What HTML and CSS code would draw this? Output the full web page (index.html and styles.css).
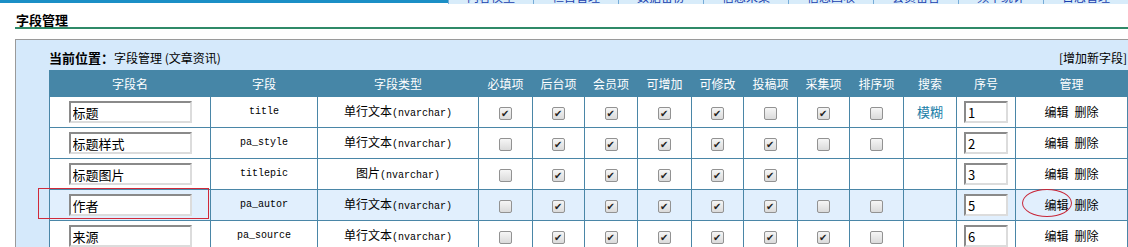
FILE: index.html
```html
<!DOCTYPE html>
<html lang="zh-CN">
  <head>
    <meta charset="UTF-8" />
    <title>字段管理</title>
    <link rel="stylesheet" href="styles.css">
  </head>
  <body>
    <div class="topnav">
      <div class="stripe"></div>
      <div class="tabs">
        <a><span>内容模型</span></a>
        <a><span>栏目管理</span></a>
        <a><span>数据备份</span></a>
        <a><span>信息采集</span></a>
        <a><span>信息回收</span></a>
        <a><span>会员留言</span></a>
        <a><span>频率统计</span></a>
        <a><span>日志管理</span></a>
      </div>
    </div>

    <h2 class="title">字段管理</h2>

    <div class="panel">
      <div class="location">
        <div><b>当前位置：</b>字段管理 (文章资讯)</div>
        <a class="add">[增加新字段]</a>
      </div>

      <table class="fields">
        <colgroup>
          <col style="width:161px"><col style="width:107px"><col style="width:161px">
          <col style="width:54px"><col style="width:52px"><col style="width:53px">
          <col style="width:54px"><col style="width:52px"><col style="width:54px">
          <col style="width:52px"><col style="width:54px"><col style="width:53px">
          <col style="width:59px"><col style="width:112px">
        </colgroup>
        <thead>
          <tr>
            <th>字段名</th><th>字段</th><th>字段类型</th>
            <th>必填项</th><th>后台项</th><th>会员项</th><th>可增加</th>
            <th>可修改</th><th>投稿项</th><th>采集项</th><th>排序项</th>
            <th>搜索</th><th>序号</th><th>管理</th>
          </tr>
        </thead>
        <tbody id="rows"></tbody>
      </table>
    </div>

    <div class="mark-rect"></div>
    <div class="mark-ellipse"></div>

    <script>
      const fields = [
        ["标题", "title", "单行文本", [1, 1, 1, 1, 1, 0, 1, 0], "模糊", "1"],
        ["标题样式", "pa_style", "单行文本", [0, 1, 1, 1, 1, 1, 0, 0], "", "2"],
        ["标题图片", "titlepic", "图片", [0, 1, 1, 1, 1, 1, null, null], "", "3"],
        ["作者", "pa_autor", "单行文本", [0, 1, 1, 1, 1, 1, 0, 0], "", "5"],
        ["来源", "pa_source", "单行文本", [0, 1, 1, 1, 1, 1, 1, 0], "", "6"],
      ];

      function box(state) {
        if (state === null) return "<td></td>";
        return `<td><span class="cb${state ? " on" : ""}"></span></td>`;
      }

      document.getElementById("rows").innerHTML = fields
        .map(
          ([name, code, type, flags, search, order], i) => `
        <tr${i === 3 ? ' class="hover"' : ""}>
          <td><input class="name" value="${name}"></td>
          <td class="code">${code}</td>
          <td>${type}<span class="code">(nvarchar)</span></td>
          ${flags.map(box).join("")}
          <td><a class="search">${search}</a></td>
          <td><input class="order" value="${order}"></td>
          <td class="ops"><a>编辑</a><a>删除</a></td>
        </tr>`
        )
        .join("");
    </script>
  </body>
</html>
```

FILE: styles.css
```css
html,
body {
  margin: 0;
  overflow: hidden;
  background: #fff;
}

body {
  font-family: "Noto Sans CJK SC", "Liberation Sans", sans-serif;
  font-size: 12px;
  color: #000;
  width: 1128px;
  height: 247px;
  position: relative;
}

.topnav {
  display: flex;
  height: 4px;
  overflow: hidden;
}

.stripe {
  width: 493px;
  height: 3px;
  background: #1b8fc6;
}

.tabs {
  display: flex;
}

.tabs a {
  display: block;
  width: 84px;
  height: 4px;
  overflow: hidden;
  border-left: 1px solid #76acd8;
  background: #d8ecfa;
  color: #1a3fae;
  text-align: center;
}

.tabs a span {
  display: block;
  line-height: 12px;
  margin-top: -9px;
}

.title {
  margin: 0 0 0 15px;
  padding: 8px 0 0 1px;
  font-size: 13px;
  line-height: 15px;
  height: 15px;
  border-bottom: 2px solid #2f8a68;
}

.panel {
  margin: 10px 0 0 15px;
  border-top: 1px solid #9a9a9a;
  border-left: 1px solid #9a9a9a;
  background: #d5e9fb;
  padding-left: 33px;
  width: 1200px;
  height: 300px;
}

.location {
  width: 1078px;
  display: flex;
  justify-content: space-between;
  padding: 9px 0 3px;
  line-height: 18px;
}

.location b {
  font-size: 13px;
}

.fields {
  border-collapse: collapse;
  table-layout: fixed;
  width: 1078px;
}

.fields th {
  height: 25px;
  padding: 0;
  line-height: 14px;
  background: #4686a7;
  color: #fff;
  font-weight: normal;
  border: 1px solid #4686a7;
}

.fields tbody tr {
  height: 31px;
}

.fields td {
  height: 30px;
  padding: 0;
  line-height: 14px;
  background: #fff;
  border: 1px solid #4a86a7;
  text-align: center;
  vertical-align: middle;
}

.fields tr.hover td {
  background: #e1effd;
}

.code {
  font-family: "Liberation Mono", monospace;
  font-size: 10px;
}

input {
  box-sizing: border-box;
  height: 22px;
  margin: 0;
  padding: 0 2px;
  font-family: "Noto Sans CJK SC", sans-serif;
  font-size: 13px;
  line-height: 16px;
  border: 2px solid;
  border-color: #8a8a8a #dcdcdc #dcdcdc #8a8a8a;
  background: #fff;
  vertical-align: middle;
  outline: none;
}

input.name {
  width: 123px;
}

input.order {
  width: 44px;
}

.cb {
  display: inline-block;
  box-sizing: border-box;
  width: 13px;
  height: 13px;
  border: 1px solid #929292;
  border-radius: 2px;
  background: linear-gradient(#f6f6f6, #dadada);
  vertical-align: middle;
  position: relative;
}

.cb.on::after {
  content: "\2714";
  position: absolute;
  left: 1px;
  top: 0;
  font-family: "DejaVu Sans", sans-serif;
  font-size: 10px;
  line-height: 11px;
  color: #222;
}

.search {
  color: #1a80a8;
  font-size: 13px;
}

.ops a {
  margin: 0 3px;
}

.mark-rect {
  position: absolute;
  left: 38px;
  top: 188px;
  width: 169px;
  height: 29px;
  border: 1px solid #d02a3a;
}

.mark-ellipse {
  position: absolute;
  left: 1022px;
  top: 189px;
  width: 48px;
  height: 26px;
  border: 1px solid #c8283a;
  border-radius: 50%;
}
```
